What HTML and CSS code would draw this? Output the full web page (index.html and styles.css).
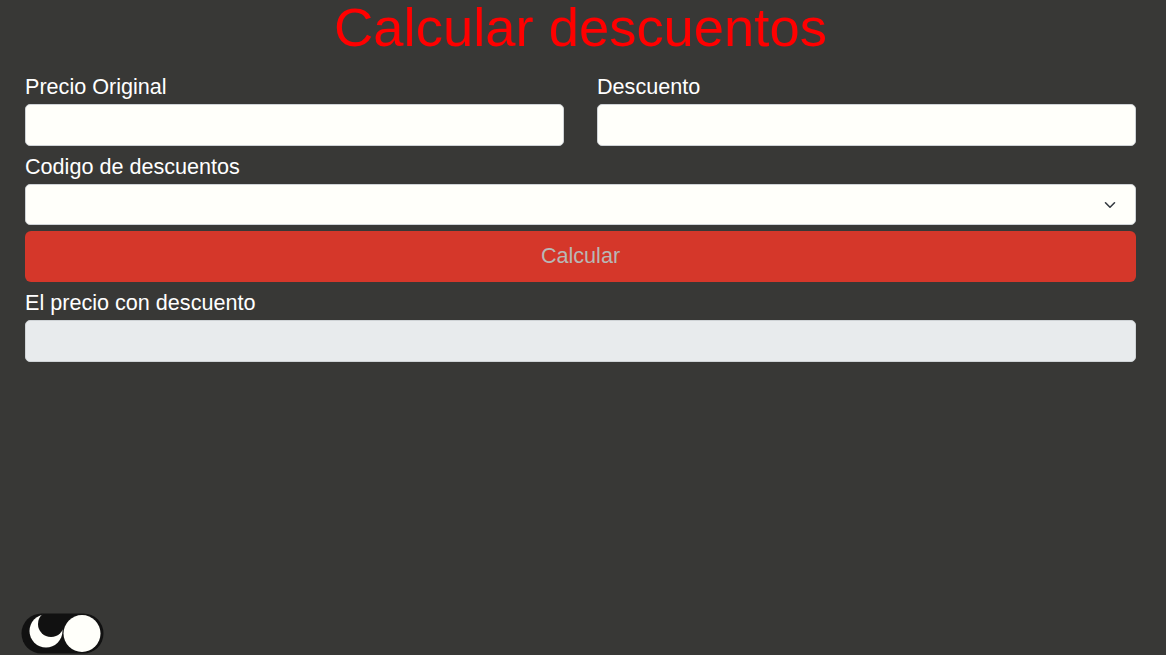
FILE: index.html
```html
<!DOCTYPE html>
<html lang="es">
<head>
<meta charset="utf-8">
<title>Calcular descuentos</title>
<link rel="stylesheet" href="styles.css">
</head>
<body>
<main class="page">
  <h1 class="title">Calcular descuentos</h1>
  <div class="row">
    <div class="field">
      <label class="label" for="precio">Precio Original</label>
      <input class="control" id="precio" type="text">
    </div>
    <div class="field">
      <label class="label" for="descuento">Descuento</label>
      <input class="control" id="descuento" type="text">
    </div>
  </div>
  <div class="field field-gap">
    <label class="label" for="codigo">Codigo de descuentos</label>
    <div class="select">
      <span class="select-value"></span>
      <svg class="chevron" width="12" height="8" viewBox="0 0 12 8"><path d="M1.5 1.8 L6 6.2 L10.5 1.8" fill="none" stroke="#343a40" stroke-width="1.6" stroke-linecap="round" stroke-linejoin="round"/></svg>
    </div>
  </div>
  <button class="btn" type="button">Calcular</button>
  <div class="field field-gap">
    <label class="label" for="resultado">El precio con descuento</label>
    <input class="control control-disabled" id="resultado" type="text" disabled>
  </div>
</main>
<div class="toggle" aria-label="Modo oscuro">
  <svg width="83" height="41" viewBox="0 0 83 41">
    <defs>
      <mask id="moon">
        <rect width="83" height="41" fill="#000"/>
        <circle cx="25" cy="18" r="16.5" fill="#fff"/>
        <circle cx="30" cy="11" r="13" fill="#000"/>
      </mask>
    </defs>
    <rect x="0.5" y="0.5" width="82" height="40" rx="20" fill="#111111"/>
    <rect x="0" y="0" width="83" height="41" fill="#fffffa" mask="url(#moon)"/>
    <circle cx="61" cy="20.5" r="18.5" fill="#fffffa"/>
  </svg>
</div>
</body>
</html>
```

FILE: styles.css
```css
html, body {
  margin: 0;
  padding: 0;
}

body {
  background: #383836;
  font-family: "Liberation Sans", Arial, sans-serif;
  color: #ffffff;
  min-height: 655px;
}

.page {
  padding: 0 30px 0 25px;
  display: flex;
  flex-direction: column;
}

.title {
  margin: 0;
  font-size: 54.4px;
  line-height: 55px;
  font-weight: 400;
  color: #ff0000;
  text-align: center;
}

.row {
  display: grid;
  grid-template-columns: 1fr 1fr;
  column-gap: 33px;
  margin-top: 20px;
}

.field {
  display: flex;
  flex-direction: column;
}

.field-gap {
  margin-top: 9px;
}

.label {
  font-size: 21.6px;
  line-height: 24px;
  margin-bottom: 5px;
  color: #ffffff;
}

.control {
  box-sizing: border-box;
  height: 42px;
  width: 100%;
  margin: 0;
  border: 1px solid #cfd3d6;
  border-radius: 5px;
  background: #fffffa;
  font: inherit;
  font-size: 16px;
  padding: 6px 12px;
}

.control-disabled {
  background: #e8ebed;
  border-color: #cfd3d6;
}

.select {
  box-sizing: border-box;
  height: 41px;
  border: 1px solid #cfd3d6;
  border-radius: 5px;
  background: #fffffa;
  display: flex;
  align-items: center;
  justify-content: space-between;
  padding: 0 19px 0 12px;
}

.chevron {
  display: block;
  margin-top: 1px;
}

.btn {
  margin-top: 6px;
  height: 51px;
  border: none;
  border-radius: 6px;
  background: #d5372a;
  color: #b8b8b6;
  font-family: "Liberation Sans", Arial, sans-serif;
  font-size: 21.6px;
  padding: 0 0 2px 0;
}

.toggle {
  position: fixed;
  left: 21px;
  bottom: 1px;
  width: 83px;
  height: 41px;
}

.toggle svg {
  display: block;
}
```
